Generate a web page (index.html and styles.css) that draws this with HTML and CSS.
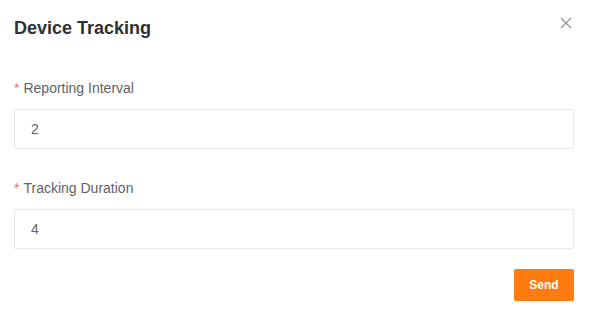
FILE: index.html
```html
<!DOCTYPE html>
<html>
<head>
<meta charset="utf-8">
<link rel="stylesheet" href="styles.css">
</head>
<body>
<div class="dialog">
  <div class="header">
    <span class="title">Device Tracking</span>
    <button class="close" aria-label="Close">
      <svg width="12" height="12" viewBox="0 0 12 12"><path d="M1 1L11 11M11 1L1 11" stroke="#909399" stroke-width="1.2" fill="none"/></svg>
    </button>
  </div>
  <div class="body">
    <div class="field">
      <label class="label"><span class="req">*</span>Reporting Interval</label>
      <div class="input">2</div>
    </div>
    <div class="field">
      <label class="label"><span class="req">*</span>Tracking Duration</label>
      <div class="input">4</div>
    </div>
  </div>
  <div class="footer">
    <button class="send">Send</button>
  </div>
</div>
</body>
</html>
```

FILE: styles.css
```css
html, body {
  margin: 0;
  padding: 0;
  background: #ffffff;
}
.dialog {
  width: 590px;
  height: 314px;
  box-sizing: border-box;
  padding: 0 16px 0 14px;
  font-family: "Liberation Sans", Arial, sans-serif;
}
.header {
  display: flex;
  justify-content: space-between;
  align-items: center;
  height: 54px;
}
.title {
  font-size: 18px;
  font-weight: bold;
  color: #303133;
  line-height: 24px;
  margin-top: 1px;
}
.close {
  border: none;
  background: none;
  padding: 0;
  width: 12px;
  height: 12px;
  margin-right: 2px;
  margin-top: -8px;
  display: flex;
}
.body {
  display: flex;
  flex-direction: column;
  gap: 29px;
  padding-top: 24px;
}
.field {
  display: flex;
  flex-direction: column;
  gap: 11px;
}
.label {
  font-size: 14px;
  color: #606266;
  line-height: 20px;
}
.req {
  color: #f56c6c;
  margin-right: 4px;
}
.input {
  height: 40px;
  box-sizing: border-box;
  border: 1px solid #e8e8e8;
  border-radius: 2px;
  padding: 0 16px;
  font-size: 14px;
  color: #606266;
  line-height: 38px;
}
.footer {
  display: flex;
  justify-content: flex-end;
  padding-top: 20px;
}
.send {
  width: 60px;
  height: 32px;
  border: none;
  border-radius: 2px;
  background: #ff7a0f;
  color: #ffffff;
  font-family: "Liberation Sans", Arial, sans-serif;
  font-size: 12px;
  font-weight: bold;
}
```
